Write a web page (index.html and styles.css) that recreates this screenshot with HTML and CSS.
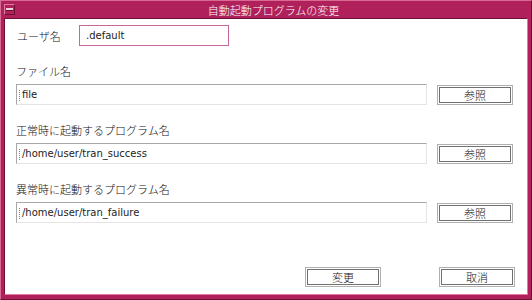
FILE: index.html
```html
<!DOCTYPE html>
<html lang="ja">
<head>
  <meta charset="UTF-8" />
  <title>自動起動プログラムの変更</title>
  <link rel="stylesheet" href="styles.css">
</head>
<body>

  <div class="window">
    <div class="titlebar">
      <div class="menu-btn"><span></span></div>
      <div class="title">自動起動プログラムの変更</div>
    </div>

    <div class="content">
      <div class="user-row">
        <label class="label">ユーザ名</label>
        <div class="field user-field">.default</div>
      </div>

      <div class="group">
        <label class="label">ファイル名</label>
        <div class="field-row">
          <div class="field wide"><i class="caret"></i>file</div>
          <button class="btn">参照</button>
        </div>
      </div>

      <div class="group">
        <label class="label">正常時に起動するプログラム名</label>
        <div class="field-row">
          <div class="field wide"><i class="caret"></i>/home/user/tran_success</div>
          <button class="btn">参照</button>
        </div>
      </div>

      <div class="group">
        <label class="label">異常時に起動するプログラム名</label>
        <div class="field-row">
          <div class="field wide"><i class="caret"></i>/home/user/tran_failure</div>
          <button class="btn">参照</button>
        </div>
      </div>

      <div class="actions">
        <button class="btn">変更</button>
        <button class="btn">取消</button>
      </div>
    </div>
  </div>

</body>
</html>
```

FILE: styles.css
```css
body {
  margin: 0;
  font-family: "Noto Sans CJK JP", "DejaVu Sans", sans-serif;
  font-size: 11px;
  font-weight: 300;
  color: #111;
}
.window {
  width: 532px;
  height: 300px;
  box-sizing: border-box;
  background-color: #b0215b; /* window frame */
  border-top: 1px solid #d86a94;
  border-left: 1px solid #d86a94;
  border-right: 1px solid #6e0f36;
  border-bottom: 1px solid #6e0f36;
  padding: 0 3px 4px 3px;
  display: flex;
  flex-direction: column;
}
.titlebar {
  height: 17px;
  display: flex;
  align-items: center;
}
.menu-btn {
  width: 11px;
  height: 11px;
  box-sizing: border-box;
  border-top: 1px solid #e07aa2;
  border-left: 1px solid #e07aa2;
  border-right: 1px solid #6e0f36;
  border-bottom: 1px solid #6e0f36;
  display: flex;
  align-items: center;
  justify-content: center;
}
.menu-btn span {
  width: 7px;
  height: 2px;
  background-color: #f0d0dc;
  border-bottom: 1px solid #6e0f36;
}
.title {
  flex: 1;
  text-align: center;
  color: white;
  font-size: 11px;
  padding-left: 4px;
}
.content {
  flex: 1;
  background-color: white;
  border-top: 1px solid #6e0f36;
  border-left: 1px solid #6e0f36;
  border-right: 1px solid #e07aa2;
  border-bottom: 1px solid #e07aa2;
  padding: 6px 12px 0 11px;
  display: flex;
  flex-direction: column;
}
.label {
  display: block;
  line-height: 14px;
}
.user-row {
  display: flex;
  align-items: center;
  padding-left: 1px;
}
.user-row .label {
  width: 62px;
}
.field {
  box-sizing: border-box;
  height: 21px;
  line-height: 19px;
  padding-left: 2px;
  font-family: "DejaVu Sans", sans-serif;
  font-size: 10px;
  font-weight: normal;
  color: #222;
  border-top: 1px solid #a8a8a8;
  border-left: 1px solid #a8a8a8;
  border-right: 1px solid #e4e4e4;
  border-bottom: 1px solid #e4e4e4;
  white-space: nowrap;
}
.user-field {
  width: 150px;
  padding-left: 6px;
  border: 1px solid #c8689a;
}
.caret {
  display: inline-block;
  width: 1px;
  height: 11px;
  border-left: 1px dotted #888;
  vertical-align: middle;
  margin-right: 1px;
}
.group {
  margin-top: 18px;
}
.group .label {
  margin-bottom: 6px;
}
.field-row {
  display: flex;
  align-items: center;
}
.wide {
  width: 411px;
}
.btn {
  box-sizing: border-box;
  width: 76px;
  height: 20px;
  margin-left: 10px;
  padding: 0;
  background-color: white;
  border: 1px solid #b0b0b0;
  box-shadow: inset 0 0 0 1px #fff, inset 0 0 0 2px #707070;
  font-family: "Noto Sans CJK JP", sans-serif;
  font-size: 11px;
  font-weight: 300;
  color: #111;
}
.actions {
  margin-top: auto;
  margin-bottom: 7px;
  display: flex;
  justify-content: flex-end;
  gap: 58px;
}
.actions .btn {
  margin-left: 0;
}
```
